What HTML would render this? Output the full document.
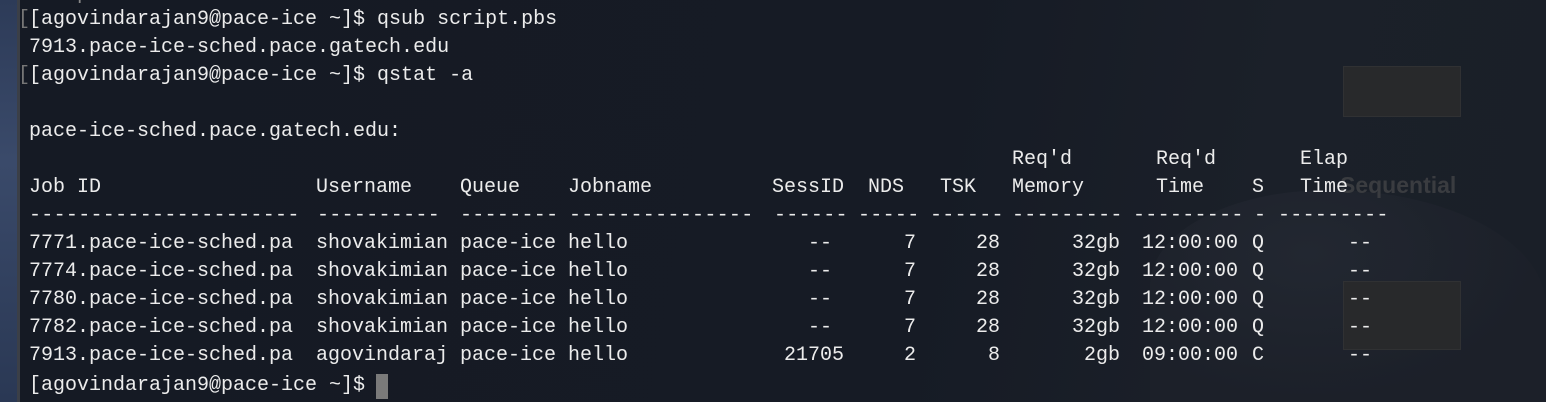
<!DOCTYPE html>
<html><head><meta charset="utf-8"><style>
html,body{margin:0;padding:0;overflow:hidden;width:1546px;height:402px}
body{position:relative;
background:linear-gradient(100deg,#151a24 0%,#161b25 60%,#1b2029 80%,#1a1f28 100%);
font-family:"Liberation Mono","DejaVu Sans Mono",monospace;font-size:20px;color:#ececec}
.mtn{position:absolute;left:1150px;top:190px;width:396px;height:212px;border-radius:45% 55% 0 0;background:radial-gradient(ellipse at 40% 30%,#242933,#1c2029 70%);opacity:.8}
.strip{position:absolute;left:0;top:0;width:17px;height:402px;background:linear-gradient(180deg,#2d3b58,#3a4a6a 40%,#2a3854)}
.edge{position:absolute;left:17px;top:0;width:3px;height:402px;background:#3b3f47}
.t{position:absolute;white-space:pre;line-height:28px;height:28px}
.r{text-align:right}
.d{letter-spacing:0.3px}
.thumb{position:absolute;background:#28292b;border:1px solid #303133}
.seq{position:absolute;left:1340px;top:172px;font-family:"Liberation Sans",sans-serif;font-weight:bold;font-size:23px;color:#3a3c40}
.cur{position:absolute;left:376px;top:374px;width:12px;height:25px;background:#7a7a7a}
</style></head><body>
<div class="mtn"></div>
<div class="strip"></div><div class="edge"></div>
<div class="thumb" style="left:1343px;top:66px;width:116px;height:49px"></div>
<div class="thumb" style="left:1343px;top:281px;width:116px;height:67px"></div>
<div class="seq">Sequential</div>

<div class="t" style="left:29px;top:-19px;color:#888">scr.pbs</div>
<div class="t" style="left:18px;top:6px;color:#777">[</div>
<div class="t" style="left:29px;top:6px">[agovindarajan9@pace-ice ~]$ qsub script.pbs</div>
<div class="t" style="left:29px;top:34px">7913.pace-ice-sched.pace.gatech.edu</div>
<div class="t" style="left:18px;top:62px;color:#777">[</div>
<div class="t" style="left:29px;top:62px">[agovindarajan9@pace-ice ~]$ qstat -a</div>
<div class="t" style="left:29px;top:118px">pace-ice-sched.pace.gatech.edu:</div>

<div class="t" style="left:1012px;top:146px">Req'd</div>
<div class="t" style="left:1156px;top:146px">Req'd</div>
<div class="t" style="left:1300px;top:146px">Elap</div>

<div class="t" style="left:29px;top:174px">Job ID</div>
<div class="t" style="left:316px;top:174px">Username</div>
<div class="t" style="left:460px;top:174px">Queue</div>
<div class="t" style="left:568px;top:174px">Jobname</div>
<div class="t" style="left:772px;top:174px">SessID</div>
<div class="t" style="left:868px;top:174px">NDS</div>
<div class="t" style="left:940px;top:174px">TSK</div>
<div class="t" style="left:1012px;top:174px">Memory</div>
<div class="t" style="left:1156px;top:174px">Time</div>
<div class="t" style="left:1252px;top:174px">S</div>
<div class="t" style="left:1300px;top:174px">Time</div>

<div class="t d" style="left:29px;top:202px">----------------------</div>
<div class="t d" style="left:317px;top:202px">----------</div>
<div class="t d" style="left:460px;top:202px">--------</div>
<div class="t d" style="left:569px;top:202px">---------------</div>
<div class="t d" style="left:774px;top:202px">------</div>
<div class="t d" style="left:858px;top:202px">-----</div>
<div class="t d" style="left:930px;top:202px">------</div>
<div class="t d" style="left:1012px;top:202px">---------</div>
<div class="t d" style="left:1133px;top:202px">---------</div>
<div class="t d" style="left:1254px;top:202px">-</div>
<div class="t d" style="left:1278px;top:202px">---------</div>

<div class="t" style="left:29px;top:230px">7771.pace-ice-sched.pa</div><div class="t" style="left:316px;top:230px">shovakimian</div><div class="t" style="left:460px;top:230px">pace-ice</div><div class="t" style="left:568px;top:230px">hello</div>
<div class="t r" style="right:714px;top:230px">--</div><div class="t r" style="right:630px;top:230px">7</div><div class="t r" style="right:546px;top:230px">28</div><div class="t r" style="right:426px;top:230px">32gb</div><div class="t" style="left:1142px;top:230px">12:00:00</div><div class="t" style="left:1252px;top:230px">Q</div><div class="t" style="left:1348px;top:230px">--</div>

<div class="t" style="left:29px;top:258px">7774.pace-ice-sched.pa</div><div class="t" style="left:316px;top:258px">shovakimian</div><div class="t" style="left:460px;top:258px">pace-ice</div><div class="t" style="left:568px;top:258px">hello</div>
<div class="t r" style="right:714px;top:258px">--</div><div class="t r" style="right:630px;top:258px">7</div><div class="t r" style="right:546px;top:258px">28</div><div class="t r" style="right:426px;top:258px">32gb</div><div class="t" style="left:1142px;top:258px">12:00:00</div><div class="t" style="left:1252px;top:258px">Q</div><div class="t" style="left:1348px;top:258px">--</div>

<div class="t" style="left:29px;top:286px">7780.pace-ice-sched.pa</div><div class="t" style="left:316px;top:286px">shovakimian</div><div class="t" style="left:460px;top:286px">pace-ice</div><div class="t" style="left:568px;top:286px">hello</div>
<div class="t r" style="right:714px;top:286px">--</div><div class="t r" style="right:630px;top:286px">7</div><div class="t r" style="right:546px;top:286px">28</div><div class="t r" style="right:426px;top:286px">32gb</div><div class="t" style="left:1142px;top:286px">12:00:00</div><div class="t" style="left:1252px;top:286px">Q</div><div class="t" style="left:1348px;top:286px">--</div>

<div class="t" style="left:29px;top:314px">7782.pace-ice-sched.pa</div><div class="t" style="left:316px;top:314px">shovakimian</div><div class="t" style="left:460px;top:314px">pace-ice</div><div class="t" style="left:568px;top:314px">hello</div>
<div class="t r" style="right:714px;top:314px">--</div><div class="t r" style="right:630px;top:314px">7</div><div class="t r" style="right:546px;top:314px">28</div><div class="t r" style="right:426px;top:314px">32gb</div><div class="t" style="left:1142px;top:314px">12:00:00</div><div class="t" style="left:1252px;top:314px">Q</div><div class="t" style="left:1348px;top:314px">--</div>

<div class="t" style="left:29px;top:342px">7913.pace-ice-sched.pa</div><div class="t" style="left:316px;top:342px">agovindaraj</div><div class="t" style="left:460px;top:342px">pace-ice</div><div class="t" style="left:568px;top:342px">hello</div>
<div class="t r" style="right:702px;top:342px">21705</div><div class="t r" style="right:630px;top:342px">2</div><div class="t r" style="right:546px;top:342px">8</div><div class="t r" style="right:426px;top:342px">2gb</div><div class="t" style="left:1142px;top:342px">09:00:00</div><div class="t" style="left:1252px;top:342px">C</div><div class="t" style="left:1348px;top:342px">--</div>

<div class="t" style="left:29px;top:372px">[agovindarajan9@pace-ice ~]$</div>
<div class="cur"></div>
</body></html>
